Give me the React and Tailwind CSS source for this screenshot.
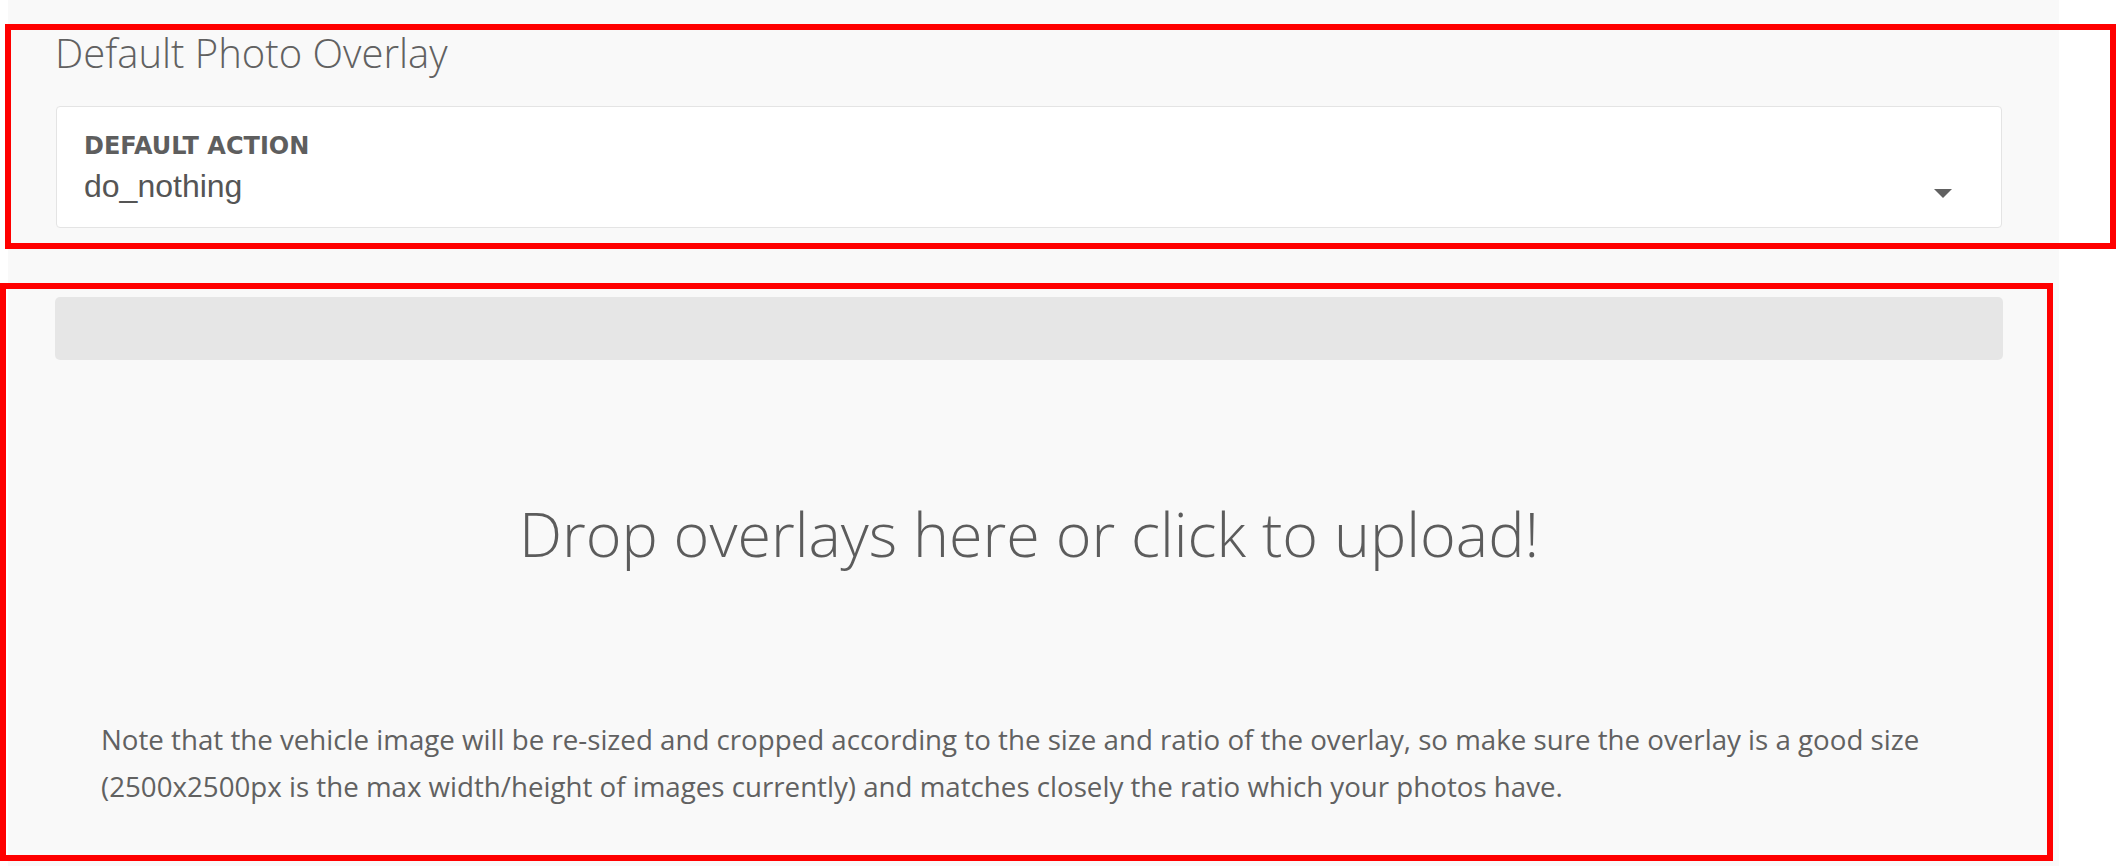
export default function App() {
  return (
    <div className="relative w-[2116px] h-[866px] bg-white overflow-hidden">
      <div className="ml-[8px] w-[2051px] h-full bg-[#f9f9f9] pl-[47px] pr-[56px]">
        <h2 className="pt-[32px] text-[40px] leading-[42px] font-light text-[#616161] font-['Open_Sans',sans-serif]">
          Default Photo Overlay
        </h2>
        <div className="mt-[32px] mx-[1px] h-[122px] bg-white border border-[#e4e4e4] rounded-[4px] flex pl-[27px] pr-[49px]">
          <div className="flex-1 pt-[28px]">
            <div className="text-[24px] leading-[23px] font-bold text-[#5e5e5e] font-['DejaVu_Sans',sans-serif]">
              DEFAULT ACTION
            </div>
            <div className="mt-[12px] text-[32px] leading-[32px] text-[#555555] font-['Liberation_Sans',Arial,sans-serif]">
              do_nothing
            </div>
          </div>
          <div className="pt-[82px]">
            <svg width="18" height="9" viewBox="0 0 18 9">
              <path d="M0 0 L18 0 L9 9 Z" fill="#616161" />
            </svg>
          </div>
        </div>
        <div className="mt-[69px] h-[63px] rounded-[5px] bg-[#e6e6e6]" />
        <div className="mt-[142px] text-center text-[61px] leading-[64px] font-light text-[#5c5c5c] font-['Open_Sans',sans-serif]">
          Drop overlays here or click to upload!
        </div>
        <p className="mt-[150px] pl-[46px] pr-[30px] text-[27.7px] leading-[47px] text-[#616161] font-['Open_Sans',sans-serif]">
          Note that the vehicle image will be re-sized and cropped according to the size and ratio of the overlay, so make sure the overlay is a good size (2500x2500px is the max width/height of images currently) and matches closely the ratio which your photos have.
        </p>
      </div>
      <div className="absolute left-[5px] top-[24px] w-[2111px] h-[225px] border-[6px] border-[#ff0000]" />
      <div className="absolute left-0 top-[283px] w-[2053px] h-[578px] border-[6px] border-[#ff0000]" />
    </div>
  );
}
